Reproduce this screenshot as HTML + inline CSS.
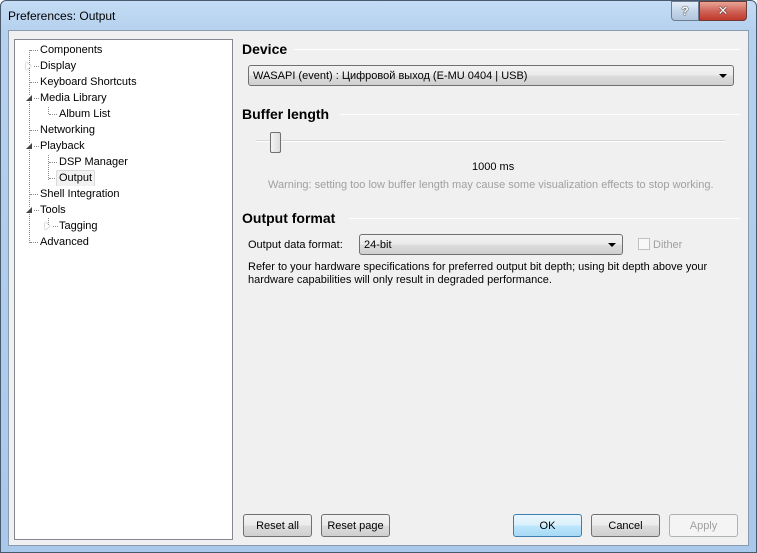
<!DOCTYPE html>
<html><head><meta charset="utf-8"><style>
*{margin:0;padding:0;box-sizing:border-box}
body{width:757px;height:553px;overflow:hidden;background:#fff;font-family:"Liberation Sans","DejaVu Sans",sans-serif;font-size:11px;color:#000;position:relative}
.a{position:absolute;white-space:nowrap}
.frame{left:0;top:0;width:757px;height:553px;background:linear-gradient(#c4dcf5,#b5d1ee 30px,#a9c8ea);border:1px solid #4a5a6e;border-radius:6px 6px 0 0}
.client{left:8px;top:30px;width:741px;height:516px;background:#f0f0f0;border:1px solid #8a9bb0}
.tree{left:14px;top:39px;width:219px;height:501px;background:#fff;border:1px solid #828790}
.ti{position:absolute;height:16px;line-height:16px}
.dh{position:absolute;border-top:1px dotted #888;width:10px}
.dv{position:absolute;border-left:1px dotted #888}
.hdr{font-weight:bold;font-size:14px}
.line{position:absolute;height:1px;background:#a0a0a0;border-bottom:1px solid #fff}
.combo{position:absolute;border:1px solid #707070;border-radius:3px;background:linear-gradient(#f2f2f2,#ebebeb 50%,#dddddd 51%,#cfcfcf);height:21px;line-height:19px;padding-left:4px}
.arrow{position:absolute;right:6px;top:8px;width:0;height:0;border-left:4px solid transparent;border-right:4px solid transparent;border-top:4px solid #000}
.btn{position:absolute;height:23px;border:1px solid #707070;border-radius:3px;background:linear-gradient(#f2f2f2,#ebebeb 50%,#dddddd 51%,#cfcfcf);text-align:center;line-height:22px}
.tri{position:absolute;width:0;height:0}
</style></head><body>
<div class="a frame"></div>
<div class="a" style="left:8px;top:9px;font-size:12px">Preferences: Output</div>
<div class="a" style="left:671px;top:1px;width:28px;height:20px;border:1px solid #6d7d92;border-radius:0 0 0 4px;background:linear-gradient(#e4eef9,#c5d6ea 50%,#b1c5de);text-align:center;font-weight:bold;font-size:12px;line-height:18px;color:#fff;text-shadow:0 0 1px #000,0 0 1px #000">?</div>
<div class="a" style="left:699px;top:1px;width:48px;height:20px;border:1px solid #6d3a34;border-radius:0 0 4px 0;background:linear-gradient(#e8a595,#d0645a 50%,#c0392b);text-align:center;font-weight:bold;font-size:13px;line-height:18px;color:#fff;text-shadow:0 0 1px #000,0 0 1px #000">✕</div>
<div class="a client"></div>
<div class="a tree">
 <div class="dv" style="left:14px;top:10px;height:193px"></div>
 <div class="dv" style="left:33px;top:107px;height:33px"></div>
 <div class="dv" style="left:33px;top:171px;height:16px"></div>
 <div class="dh" style="left:15px;top:10px"></div>
 <div class="dh" style="left:19px;top:26px;width:5px"></div>
 <div class="dh" style="left:15px;top:42px"></div>
 <div class="dh" style="left:19px;top:58px;width:5px"></div>
 <div class="dh" style="left:34px;top:74px"></div>
 <div class="dv" style="left:33px;top:65px;height:9px"></div>
 <div class="dh" style="left:15px;top:90px"></div>
 <div class="dh" style="left:19px;top:106px;width:5px"></div>
 <div class="dh" style="left:34px;top:122px"></div>
 <div class="dh" style="left:34px;top:138px"></div>
 <div class="dh" style="left:15px;top:154px"></div>
 <div class="dh" style="left:19px;top:170px;width:5px"></div>
 <div class="dh" style="left:38px;top:186px;width:5px"></div>
 <div class="dh" style="left:15px;top:202px"></div>
 <div class="tri" style="left:11px;top:22px;border-left:5px solid #fff;border-top:4px solid transparent;border-bottom:4px solid transparent;filter:drop-shadow(0 0 .6px #555)"></div>
 <div class="tri" style="left:11px;top:55px;border-right:6px solid #444;border-top:6px solid transparent;background:#fff"></div>
 <div class="tri" style="left:11px;top:103px;border-right:6px solid #444;border-top:6px solid transparent;background:#fff"></div>
 <div class="tri" style="left:11px;top:167px;border-right:6px solid #444;border-top:6px solid transparent;background:#fff"></div>
 <div class="tri" style="left:30px;top:182px;border-left:5px solid #fff;border-top:4px solid transparent;border-bottom:4px solid transparent;filter:drop-shadow(0 0 .6px #555)"></div>
 <div class="ti" style="left:24px;top:2px;background:#fff;padding:0 1px">Components</div>
 <div class="ti" style="left:24px;top:18px;background:#fff;padding:0 1px">Display</div>
 <div class="ti" style="left:24px;top:34px;background:#fff;padding:0 1px">Keyboard Shortcuts</div>
 <div class="ti" style="left:24px;top:50px;background:#fff;padding:0 1px">Media Library</div>
 <div class="ti" style="left:43px;top:66px;background:#fff;padding:0 1px">Album List</div>
 <div class="ti" style="left:24px;top:82px;background:#fff;padding:0 1px">Networking</div>
 <div class="ti" style="left:24px;top:98px;background:#fff;padding:0 1px">Playback</div>
 <div class="ti" style="left:43px;top:114px;background:#fff;padding:0 1px">DSP Manager</div>
 <div class="ti" style="left:41px;top:130px;background:#f2f2f2;border:1px solid #d9d9d9;border-radius:2px;padding:0 2px;line-height:15px;height:17px">Output</div>
 <div class="ti" style="left:24px;top:146px;background:#fff;padding:0 1px">Shell Integration</div>
 <div class="ti" style="left:24px;top:162px;background:#fff;padding:0 1px">Tools</div>
 <div class="ti" style="left:43px;top:178px;background:#fff;padding:0 1px">Tagging</div>
 <div class="ti" style="left:24px;top:194px;background:#fff;padding:0 1px">Advanced</div>
</div>

<div class="a hdr" style="left:242px;top:41px">Device</div>
<div class="line" style="left:294px;top:49px;width:446px"></div>
<div class="combo" style="left:248px;top:65px;width:486px;line-height:20px">WASAPI (event) : Цифровой выход (E-MU 0404 | USB)<div class="arrow"></div></div>

<div class="a hdr" style="left:242px;top:106px">Buffer length</div>
<div class="line" style="left:340px;top:114px;width:400px"></div>
<div class="a" style="left:256px;top:140px;width:469px;height:2px;background:#d6d6d6;border-bottom:1px solid #fff"></div>
<div class="a" style="left:270px;top:132px;width:11px;height:21px;border:1px solid #707070;border-radius:2px;background:linear-gradient(90deg,#f4f4f4,#dcdcdc)"></div>
<div class="a" style="left:472px;top:161px">1000 ms</div>
<div class="a" style="left:268px;top:179px;color:#a0a0a0">Warning: setting too low buffer length may cause some visualization effects to stop working.</div>

<div class="a hdr" style="left:242px;top:210px">Output format</div>
<div class="line" style="left:349px;top:218px;width:391px"></div>
<div class="a" style="left:248px;top:239px">Output data format:</div>
<div class="combo" style="left:359px;top:234px;width:264px;line-height:20px">24-bit<div class="arrow"></div></div>
<div class="a" style="left:638px;top:238px;width:12px;height:12px;border:1px solid #c0c0c0;background:#f8f8f8"></div>
<div class="a" style="left:653px;top:239px;color:#a0a0a0">Dither</div>
<div class="a" style="left:248px;top:261px;line-height:13px">Refer to your hardware specifications for preferred output bit depth; using bit depth above your<br>hardware capabilities will only result in degraded performance.</div>

<div class="btn" style="left:243px;top:514px;width:69px">Reset all</div>
<div class="btn" style="left:321px;top:514px;width:69px">Reset page</div>
<div class="btn" style="left:513px;top:514px;width:69px;border-color:#3c7fb1;background:linear-gradient(#eaf6fd,#d9f0fc 50%,#bee6fd 51%,#a7d9f5)">OK</div>
<div class="btn" style="left:591px;top:514px;width:69px">Cancel</div>
<div class="btn" style="left:669px;top:514px;width:69px;border-color:#adb2b5;background:#f4f4f4;color:#a0a0a0">Apply</div>
</body></html>
